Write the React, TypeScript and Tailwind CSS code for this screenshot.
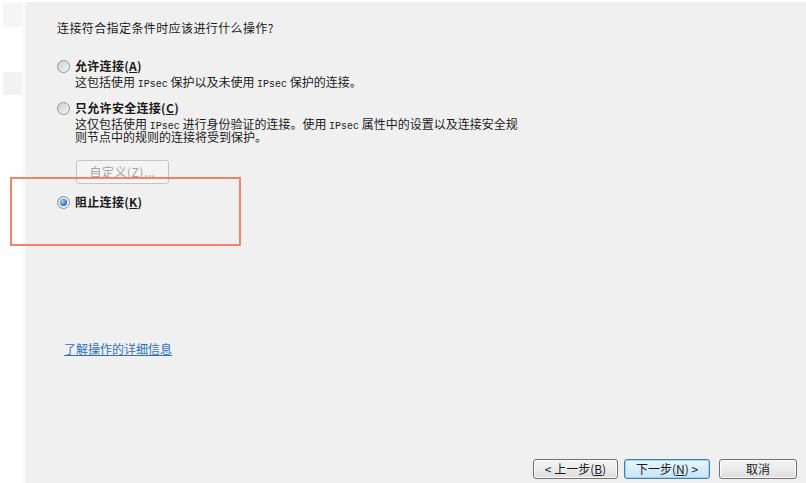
import React from "react";

const font = { fontFamily: '"Noto Sans CJK SC", "Noto Sans", sans-serif' } as const;

function Mono({ children }: { children: React.ReactNode }) {
  return (
    <span className="font-['Liberation_Mono',monospace] text-[10px] leading-[10px]">{children}</span>
  );
}

function Radio({ checked }: { checked?: boolean }) {
  return (
    <span className="flex h-[13px] w-[13px] shrink-0 items-center justify-center rounded-full border border-[#8f8f8f] bg-gradient-to-br from-[#d4d4d4] to-[#fbfbfb]">
      {checked ? (
        <span className="h-[7px] w-[7px] rounded-full bg-[radial-gradient(circle_at_35%_35%,#9fd6ff,#2a78d0_60%,#1b4f9a)]" />
      ) : (
        <span className="h-[9px] w-[9px] rounded-full bg-gradient-to-br from-[#cfcfcf] to-[#f4f4f4]" />
      )}
    </span>
  );
}

function WinButton({
  children,
  primary,
  width,
}: {
  children: React.ReactNode;
  primary?: boolean;
  width: string;
}) {
  return (
    <div
      className={`flex h-[20px] items-center justify-center rounded-[3px] border text-[12px] leading-none text-[#1a1a1a] ${width} ${
        primary
          ? "border-[#3c7fb1] bg-gradient-to-b from-[#eaf6fd] to-[#c6e4f6] shadow-[inset_0_0_0_1px_#9fd3f5]"
          : "border-[#707070] bg-gradient-to-b from-[#f4f4f4] via-[#ebebeb] to-[#dcdcdc] shadow-[inset_0_0_0_1px_#fcfcfc]"
      }`}
    >
      {children}
    </div>
  );
}

export default function App() {
  return (
    <div className="relative flex h-[483px] w-[806px] overflow-hidden bg-white text-[#1a1a1a]" style={font}>
      {/* left strip */}
      <div className="flex w-[23px] shrink-0 flex-col pl-[3px] pr-[1px] pt-[3px]">
        <div className="h-[24px] w-full bg-[#f5f5f5]" />
        <div className="mt-[45px] h-[23px] w-full bg-[#f2f2f2]" />
      </div>
      {/* main panel */}
      <div className="mt-[2px] flex flex-1 flex-col border-l-[3px] border-[#f7f7f7] bg-[#f0f0f0] pl-[31px]">
        <div className="mt-[18px] h-[16px] text-[12px] leading-[16px] tracking-[0.4px]">
          连接符合指定条件时应该进行什么操作?
        </div>

        <div className="mt-[22px] flex h-[16px] items-center gap-[5px] text-[12px] leading-[16px]">
          <Radio />
          <span className="font-bold tracking-[0.3px]">
            允许连接(<span className="underline">A</span>)
          </span>
        </div>
        <div className="h-[16px] pl-[18px] text-[12px] leading-[16px]">
          这包括使用 <Mono>IPsec</Mono> 保护以及未使用 <Mono>IPsec</Mono> 保护的连接。
        </div>

        <div className="mt-[10px] flex h-[16px] items-center gap-[5px] text-[12px] leading-[16px]">
          <Radio />
          <span className="font-bold tracking-[0.3px]">
            只允许安全连接(<span className="underline">C</span>)
          </span>
        </div>
        <div className="pl-[18px] pt-[1px] text-[12px] leading-[13px]">
          <div className="h-[13px] whitespace-nowrap">
            这仅包括使用 <Mono>IPsec</Mono> 进行身份验证的连接。使用 <Mono>IPsec</Mono> 属性中的设置以及连接安全规
          </div>
          <div className="h-[13px]">则节点中的规则的连接将受到保护。</div>
        </div>

        <div className="mt-[17px] pl-[19px]">
          <div className="flex h-[24px] w-[93px] items-center justify-center rounded-[3px] border border-[#c4c4c4] bg-[#f4f4f4] text-[12px] tracking-[0.5px] text-[#a3a3a3]">
            自定义(Z)...
          </div>
        </div>

        <div className="mt-[10px] flex h-[16px] items-center gap-[5px] text-[12px] leading-[16px]">
          <Radio checked />
          <span className="font-bold tracking-[0.3px]">
            阻止连接(<span className="underline">K</span>)
          </span>
        </div>

        <div className="mt-[131px] h-[16px] pl-[7px] text-[12px] leading-[16px]">
          <span className="text-[#2f6fc6] underline decoration-[#2f6fc6]">了解操作的详细信息</span>
        </div>

        <div className="mt-auto flex justify-end gap-[6px] pb-[4px] pr-[9px]">
          <WinButton width="w-[85px]">&lt; 上一步(<span className="underline">B</span>)</WinButton>
          <WinButton width="w-[86px]" primary>
            下一步(<span className="underline">N</span>) &gt;
          </WinButton>
          <div className="ml-[3px]">
            <WinButton width="w-[78px]">取消</WinButton>
          </div>
        </div>
      </div>

      {/* annotation box */}
      <div className="pointer-events-none absolute left-[10px] top-[177px] h-[69px] w-[231px] border-2 border-[#f4806e]" />
    </div>
  );
}
